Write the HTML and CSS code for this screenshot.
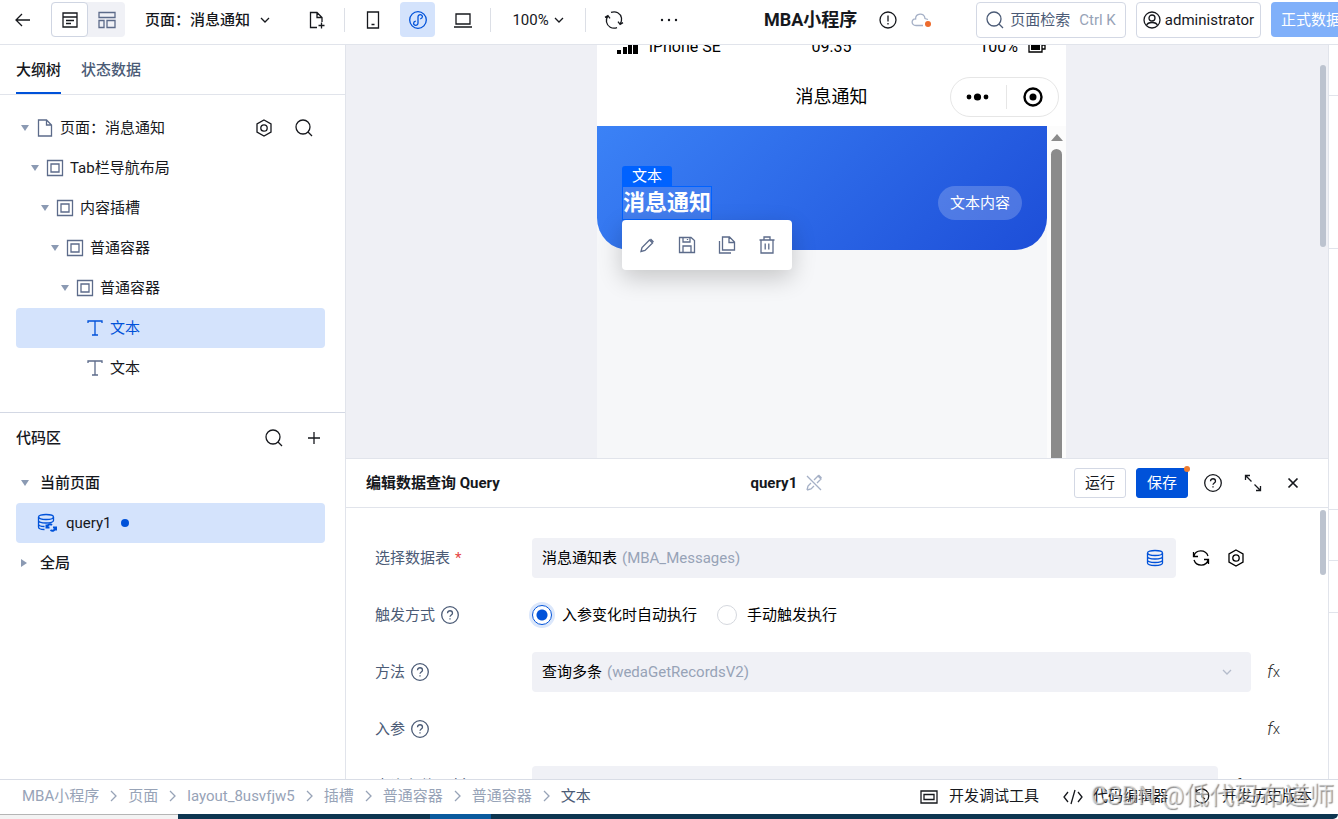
FILE: index.html
```html
<!DOCTYPE html>
<html lang="zh-CN">
<head>
    <meta charset="UTF-8">
    <meta name="viewport" content="width=device-width, initial-scale=1.0">
    <title>MBA小程序</title>
    <link rel="stylesheet" href="styles.css">
</head>
<body>
    <!-- shared icons -->
    <svg class="sprite" aria-hidden="true">
        <symbol id="i-search" viewBox="0 0 18 18"><circle cx="8" cy="8" r="7"/><path d="M13 13l4 4"/></symbol>
        <symbol id="i-gear" viewBox="0 0 18 18"><path d="M9 1l7 4v8l-7 4-7-4V5z"/><circle cx="9" cy="9" r="3.2"/></symbol>
        <symbol id="i-help" viewBox="0 0 20 20"><circle cx="10" cy="10" r="8.300"/><path d="M7.500 8.200c0-3.300 5-3.300 5 0 0 1.800-2.500 1.800-2.500 3.600M10 13.200v1.400"/></symbol>
        <symbol id="i-down" viewBox="0 0 10 10"><path d="M1 3l4 4 4-4"/></symbol>
        <symbol id="i-right" viewBox="0 0 11 12"><path d="M3 1l5 5-5 5"/></symbol>
        <symbol id="i-box" viewBox="0 0 18 18"><path d="M1.500 1.500h15v15h-15zM5 5h8v8H5z"/></symbol>
        <symbol id="i-text" viewBox="0 0 18 18"><path d="M2 4V2h14v2M9 2v14M6 16h6"/></symbol>
        <symbol id="i-db" viewBox="0 0 18 18"><ellipse cx="9" cy="4" rx="7.500" ry="2.500"/><path d="M1.500 4v10c0 3.300 15 3.300 15 0V4M1.500 7.500c0 3.300 15 3.300 15 0M1.500 11c0 3.300 15 3.300 15 0"/></symbol>
    </svg>

    <header class="topbar">
        <div class="top-main">
            <button class="plain" aria-label="返回"><svg width="16" height="18" viewBox="0 0 16 18"><path d="M15 9H1M7 3L1 9l6 6"/></svg></button>
            <div class="segment">
                <button class="on" aria-label="大纲"><svg width="18" height="18" viewBox="0 0 18 18"><path d="M2 2h14v14H2zM2 6h14M5 9.500h8M5 12.500h5"/></svg></button>
                <button aria-label="布局"><svg width="18" height="18" viewBox="0 0 18 18"><path d="M1 1.500h16v5H1zM1 9.500h5v7H1zM9 9.500h8v7H9z"/></svg></button>
            </div>
            <button class="plain page-name">页面：消息通知 <svg width="10" height="10"><use href="#i-down"/></svg></button>
        </div>
        <div class="top-tools">
            <button class="tool" aria-label="新建页面"><svg width="18" height="18" viewBox="0 0 18 18"><path d="M9 16.500H2.500v-15H9l5 5V11M9 1.500v5h5M13.500 11.500v6M10.500 14.500h6"/></svg></button>
            <span class="divider"></span>
            <button class="tool" aria-label="手机"><svg width="18" height="18" viewBox="0 0 18 18"><path d="M3.500 1h11v16h-11zM7.500 13.500h3"/></svg></button>
            <button class="tool on" aria-label="小程序"><svg width="18" height="18" viewBox="0 0 18 18"><circle cx="9" cy="9" r="8.300"/><path d="M9 12V6c0-3.200 4.600-2.800 4.400-.2-.1 1.300-1.200 1.900-2.200 2M9 6v6c0 3.200-4.600 2.800-4.400.2.100-1.300 1.200-1.900 2.200-2"/></svg></button>
            <button class="tool" aria-label="电脑"><svg width="18" height="18" viewBox="0 0 18 18"><path d="M2 3h14v10H2zM0 16h18"/></svg></button>
            <span class="divider"></span>
            <button class="tool zoom">100% <svg width="10" height="10"><use href="#i-down"/></svg></button>
            <span class="divider"></span>
            <button class="tool" aria-label="刷新"><svg width="20" height="20" viewBox="0 0 20 20"><path d="M7 2.400c5-1.800 9.600 1 10.500 5.600.4 2.500-.1 4-1.300 5.800M13 17.600c-5 1.800-9.600-1-10.500-5.600-.4-2.500.1-4 1.300-5.800M1 7.400l2.900-1.800L6 8.400M19 12.600l-2.900 1.800L14 11.600"/></svg></button>
            <button class="tool more" aria-label="更多"><svg class="solid" width="18" height="6" viewBox="0 0 18 6"><circle cx="2" cy="3" r="1.200"/><circle cx="9" cy="3" r="1.200"/><circle cx="16" cy="3" r="1.200"/></svg></button>
        </div>
        <div class="app-name">
            <h1>MBA小程序</h1>
            <svg width="18" height="18" viewBox="0 0 18 18"><circle cx="9" cy="9" r="8"/><path d="M9 4.500v6M9 12v1.500"/></svg>
            <svg width="20" height="18" viewBox="0 0 20 18"><path class="cloud" d="M12 14.500H5C-.5 14.500.3 7.500 4.600 8 4.400 2 13.500 1 14 7.500l3 1"/><circle class="cloud-dot" cx="17" cy="13" r="3"/></svg>
        </div>
        <div class="top-right">
            <button class="search-box"><svg width="18" height="18"><use href="#i-search"/></svg>页面检索 <kbd>Ctrl K</kbd></button>
            <button class="user"><svg width="18" height="18" viewBox="0 0 18 18"><circle cx="9" cy="9" r="8"/><circle cx="9" cy="7" r="3"/><path d="M3.500 14.500c1.200-4 9.800-4 11 0"/></svg>administrator</button>
            <button class="release">正式数据</button>
        </div>
    </header>

    <main class="workspace">
        <aside class="sidebar">
            <section class="outline">
                <nav class="tabs">
                    <a class="on" href="#outline">大纲树</a>
                    <a href="#state">状态数据</a>
                </nav>
                <ul class="tree" id="outline">
                    <li class="row">
                        <i class="caret"></i>
                        <svg class="node" width="18" height="18" viewBox="0 0 18 18"><path d="M2.500 1h8l5 5v11h-13zM10.500 1v5h5"/></svg>页面：消息通知
                        <span class="row-tools">
                            <button class="plain" aria-label="设置"><svg width="18" height="18"><use href="#i-gear"/></svg></button>
                            <button class="plain" aria-label="搜索"><svg width="18" height="18"><use href="#i-search"/></svg></button>
                        </span>
                    </li>
                    <li class="row lv1"><i class="caret"></i><svg class="node" width="18" height="18"><use href="#i-box"/></svg>Tab栏导航布局</li>
                    <li class="row lv2"><i class="caret"></i><svg class="node" width="18" height="18"><use href="#i-box"/></svg>内容插槽</li>
                    <li class="row lv3"><i class="caret"></i><svg class="node" width="18" height="18"><use href="#i-box"/></svg>普通容器</li>
                    <li class="row lv4"><i class="caret"></i><svg class="node" width="18" height="18"><use href="#i-box"/></svg>普通容器</li>
                    <li class="row lv5 on"><i class="caret none"></i><svg class="node" width="18" height="18"><use href="#i-text"/></svg>文本</li>
                    <li class="row lv5"><i class="caret none"></i><svg class="node" width="18" height="18"><use href="#i-text"/></svg>文本</li>
                </ul>
            </section>
            <section class="code">
                <div class="code-head">
                    <h2>代码区</h2>
                    <span class="row-tools">
                        <button class="plain" aria-label="搜索代码"><svg width="18" height="18"><use href="#i-search"/></svg></button>
                        <button class="plain" aria-label="新增"><svg width="18" height="18" viewBox="0 0 18 18"><path d="M9 3v12M3 9h12"/></svg></button>
                    </span>
                </div>
                <ul class="tree">
                    <li class="row group"><i class="caret"></i>当前页面</li>
                    <li class="row query on">
                        <svg width="20" height="20" viewBox="0 0 20 20"><ellipse cx="9" cy="4" rx="7.500" ry="2.500"/><path d="M1.500 4v10c0 1.500 2.500 2.500 6 2.500M1.500 7.500c0 3.300 15 3.300 15 0V4M1.500 11c0 1.500 2.500 2.500 6 2.500"/><path class="bold" d="M10 14c.5-2.500 3-3.500 5-2M9.500 11.500v3h3M18.500 15c-.5 2.500-3 3.500-5 2M19 17.500v-3h-3"/></svg>
                        query1 <i class="dot"></i>
                    </li>
                    <li class="row group"><i class="caret closed"></i>全局</li>
                </ul>
            </section>
        </aside>

        <div class="center">
            <section class="canvas">
                <div class="phone">
                    <div class="status">
                        <span class="carrier"><svg class="solid" width="22" height="14" viewBox="0 0 22 14"><path d="M0 10h4v4H0zM6 7h4v7H6zM11 4h4v10h-4zM16 0h5v14h-5z"/></svg>iPhone SE</span>
                        <span>09:35</span>
                        <span class="battery">100% <svg width="18" height="12" viewBox="0 0 18 12"><path d="M1 1h13v10H1zM14 4h3v4h-3"/><path class="core" d="M3 3h9v6H3z"/></svg></span>
                    </div>
                    <div class="navbar">
                        <span class="nav-title">消息通知</span>
                        <div class="capsule">
                            <svg class="solid" width="24" height="10" viewBox="0 0 24 10"><circle cx="3" cy="5" r="2.400"/><circle cx="11.500" cy="5" r="3.600"/><circle cx="20" cy="5" r="2.400"/></svg>
                            <span class="capsule-line"></span>
                            <svg width="20" height="20" viewBox="0 0 20 20"><circle class="ring" cx="10" cy="10" r="8.500"/><circle class="core" cx="10" cy="10" r="3.500"/></svg>
                        </div>
                    </div>
                    <div class="screen">
                        <div class="page">
                            <div class="banner">
                                <div class="picked">
                                    消息通知
                                    <span class="tag">文本</span>
                                    <div class="float-tools">
                                        <button class="plain" aria-label="编辑"><svg width="18" height="18" viewBox="0 0 18 18"><path d="M3 15.500l1-4 7.500-7.500 3 3L7 14.500zM12.500 3l3 3"/></svg></button>
                                        <button class="plain" aria-label="保存组件"><svg width="18" height="18" viewBox="0 0 18 18"><path d="M1.500 1.500H13l3.500 3v12h-15zM5 1.500V6h7V1.500M5 16.500V10h8v6.500M9.500 3v1"/></svg></button>
                                        <button class="plain" aria-label="复制"><svg width="18" height="18" viewBox="0 0 18 18"><path d="M4.500 1h7l5 5v8h-12zM11 1v5.500h5M1.500 5v12H13"/></svg></button>
                                        <button class="plain" aria-label="删除"><svg width="18" height="18" viewBox="0 0 18 18"><path d="M1.500 4h15M6 4V1h6v3M3 4v13h12V4M7.200 7.500v6M10.800 7.500v6"/></svg></button>
                                    </div>
                                </div>
                                <span class="pill">文本内容</span>
                            </div>
                        </div>
                        <div class="phone-scroll"><i class="up"></i><i class="thumb"></i></div>
                    </div>
                </div>
                <i class="scroll-thumb"></i>
            </section>

            <section class="editor">
                <div class="editor-head">
                    <h2>编辑数据查询 Query</h2>
                    <div class="query-name">query1
                        <svg width="18" height="18" viewBox="0 0 18 18"><path d="M2 16l1-4 3-3M9 6l4-4 3 3-4 4M9 12l-3 3-4 1M13.500 1l3 3M2 2l14 14"/></svg>
                    </div>
                    <div class="actions">
                        <button class="btn">运行</button>
                        <button class="btn primary">保存<i class="badge"></i></button>
                        <button class="icon-btn" aria-label="帮助"><svg width="20" height="20"><use href="#i-help"/></svg></button>
                        <button class="icon-btn" aria-label="全屏"><svg width="18" height="18" viewBox="0 0 18 18"><path d="M1.500 6V1.500H6M1.500 1.500l6 6M16.500 12v4.500H12M16.500 16.500l-6-6"/></svg></button>
                        <button class="icon-btn" aria-label="关闭"><svg class="thick" width="18" height="18" viewBox="0 0 18 18"><path d="M4.500 4.500l9 9M13.500 4.500l-9 9"/></svg></button>
                    </div>
                </div>
                <form class="form">
                    <div class="field">
                        <label class="name" for="table">选择数据表<em>*</em></label>
                        <div class="control">
                            <select id="table"><option>消息通知表</option></select>
                            <span class="hint">(MBA_Messages)</span>
                            <svg class="blue" width="18" height="18"><use href="#i-db"/></svg>
                        </div>
                        <div class="tail tail-table">
                            <button type="button" class="plain" aria-label="刷新数据表"><svg width="18" height="18" viewBox="0 0 18 18"><path d="M2 7c1.500-6.500 11.500-7 14 0M1.500 3v4.500H6M16 11c-1.500 6.500-11.500 7-14 0M16.500 15v-4.500H12"/></svg></button>
                            <button type="button" class="plain" aria-label="数据表设置"><svg width="18" height="18"><use href="#i-gear"/></svg></button>
                        </div>
                    </div>
                    <div class="field">
                        <span class="name">触发方式<svg width="20" height="20"><use href="#i-help"/></svg></span>
                        <div class="radios">
                            <label><input type="radio" name="trigger" checked>入参变化时自动执行</label>
                            <label><input type="radio" name="trigger">手动触发执行</label>
                        </div>
                    </div>
                    <div class="field">
                        <label class="name" for="method">方法<svg width="20" height="20"><use href="#i-help"/></svg></label>
                        <div class="control">
                            <select id="method"><option>查询多条</option></select>
                            <span class="hint">(wedaGetRecordsV2)</span>
                            <svg class="arrow" width="10" height="10"><use href="#i-down"/></svg>
                        </div>
                        <div class="tail tail-fx"><button type="button" class="plain fx"><i>f</i>x</button></div>
                    </div>
                    <div class="field">
                        <span class="name">入参<svg width="20" height="20"><use href="#i-help"/></svg></span>
                        <span class="blank"></span>
                        <div class="tail tail-fx"><button type="button" class="plain fx"><i>f</i>x</button></div>
                    </div>
                    <div class="field">
                        <label class="name" for="where">查询条件 (对象)</label>
                        <input class="control" id="where" type="text">
                        <div class="tail tail-where"><button type="button" class="plain fx"><i>f</i>x</button></div>
                    </div>
                    <i class="scroll-thumb form-thumb"></i>
                </form>
            </section>
        </div>

        <aside class="props"><i></i><i></i><i></i><i></i><i></i></aside>
    </main>

    <footer class="bottombar">
        <nav class="crumbs">
            <a href="#app">MBA小程序</a><svg width="11" height="12"><use href="#i-right"/></svg>
            <a href="#page">页面</a><svg width="11" height="12"><use href="#i-right"/></svg>
            <a href="#layout">layout_8usvfjw5</a><svg width="11" height="12"><use href="#i-right"/></svg>
            <a href="#slot">插槽</a><svg width="11" height="12"><use href="#i-right"/></svg>
            <a href="#c1">普通容器</a><svg width="11" height="12"><use href="#i-right"/></svg>
            <a href="#c2">普通容器</a><svg width="11" height="12"><use href="#i-right"/></svg>
            <a class="on" href="#text">文本</a>
        </nav>
        <div class="dev-tools">
            <button class="plain"><svg width="20" height="18" viewBox="0 0 20 18"><path d="M2 4h16v12H2zM5 7.500h10v5H5z"/></svg>开发调试工具</button>
            <button class="plain"><svg width="20" height="18" viewBox="0 0 20 18"><path d="M5 5L1 10l4 5M15 5l4 5-4 5M12 3L8 17"/></svg>代码编辑器</button>
            <button class="plain"><svg width="20" height="18" viewBox="0 0 20 18"><path d="M4 5a7 7 0 1 1 0 8M4 2v4h4M10 6v4l3 2"/></svg>开发历史版本</button>
        </div>
        <span class="watermark">CSDN @低代码布道师</span>
    </footer>
    <div class="taskbar"><i class="task-light"></i><i class="task-dark"></i><i class="task-active"></i><i class="task-rest"></i></div>
</body>
</html>
```
FILE: styles.css
```css
* {
    box-sizing: border-box;
}
body {
    display: flex;
    flex-direction: column;
    height: 100vh;
    margin: 0;
    overflow: hidden;
    background: #fff;
    color: #16181d;
    font-family: Roboto, "Noto Sans CJK SC", sans-serif;
    font-size: 15px;
    line-height: 20px;
}
h1, h2, ul {
    margin: 0;
    padding: 0;
}
h2 {
    font-size: 15px;
    font-weight: 500;
}
button, select, input, kbd {
    font: inherit;
    color: inherit;
}
button {
    display: flex;
    align-items: center;
    justify-content: center;
    padding: 0;
    border: 0;
    background: none;
    white-space: nowrap;
}
a {
    color: inherit;
    text-decoration: none;
}
svg {
    flex: none;
    fill: none;
    stroke: currentColor;
    stroke-width: 1.3;
}
svg.solid {
    fill: currentColor;
    stroke: none;
}
svg.thick {
    stroke-width: 1.7;
}
.sprite {
    display: none;
}

/* top bar */
.topbar {
    display: flex;
    flex: none;
    align-items: center;
    height: 45px;
    padding: 0 0 5px 15px;
    border-bottom: 1px solid #e1e4eb;
}
.top-main, .top-tools, .app-name, .top-right {
    display: flex;
    flex: none;
    align-items: center;
}
.top-main {
    gap: 20px;
}
.segment {
    display: flex;
    border-radius: 4px;
    background: #f0f1f6;
}
.segment button {
    width: 37px;
    height: 35px;
    border-radius: 4px;
    color: #5c6b8a;
}
.segment .on {
    border: 1px solid #cfd5e2;
    background: #fff;
    color: #16181d;
}
.page-name {
    gap: 10px;
    font-weight: 500;
}
.top-tools {
    gap: 10px;
    margin-left: 29px;
}
.tool {
    width: 35px;
    height: 35px;
    border-radius: 4px;
}
.tool.on {
    background: #d4e3fc;
    color: #0052d9;
}
.tool.zoom {
    gap: 5px;
    width: 74px;
}
.tool.more {
    margin-left: 10px;
}
.divider {
    width: 1px;
    height: 24px;
    background: #dcdfe6;
}
.app-name {
    gap: 14px;
    margin-left: 78px;
}
.app-name h1 {
    margin-right: 8px;
    font-size: 18px;
    font-weight: 700;
}
.cloud {
    stroke: #a5b0c6;
}
.cloud-dot {
    fill: #ed6b2d;
    stroke: none;
}
.top-right {
    gap: 10px;
    margin: 0 -13px 0 auto;
}
.search-box, .user {
    height: 36px;
    border: 1px solid #d3d8e4;
    border-radius: 4px;
}
.search-box {
    gap: 6px;
    width: 150px;
    color: #4b5b76;
}
.search-box kbd {
    margin-left: 3px;
    color: #97a3b7;
}
.user {
    gap: 4px;
    width: 125px;
}
.release {
    width: 80px;
    height: 35px;
    border-radius: 4px;
    background: #80b0fa;
    color: #fff;
}

/* left column */
.workspace {
    display: flex;
    flex: 1;
    min-height: 0;
}
.sidebar {
    display: flex;
    flex: none;
    flex-direction: column;
    width: 346px;
    border-right: 1px solid #e1e4eb;
}
.outline, .code {
    flex: 1;
    min-height: 0;
}
.outline {
    border-bottom: 1px solid #d3d8e4;
}
.tabs {
    display: flex;
    gap: 20px;
    height: 50px;
    padding: 0 16px;
    border-bottom: 1px solid #e1e4eb;
    color: #4b5b76;
    font-weight: 500;
    line-height: 50px;
}
.tabs .on {
    border-bottom: 2px solid #0052d9;
    color: #16181d;
}
.tree {
    padding: 0 20px 0 16px;
    list-style: none;
}
.outline .tree {
    padding-top: 13px;
}
.row {
    display: flex;
    align-items: center;
    height: 40px;
    border-radius: 4px;
}
.row.on {
    background: #d4e3fc;
}
.row .node {
    margin-right: 6px;
    color: #5c6b8a;
}
.outline .row.on, .outline .row.on .node {
    color: #0052d9;
}
.lv1 { padding-left: 10px; }
.lv2 { padding-left: 20px; }
.lv3 { padding-left: 30px; }
.lv4 { padding-left: 40px; }
.lv5 { padding-left: 50px; }
.caret {
    flex: none;
    width: 8px;
    margin: 0 7px 0 5px;
    border: 4px solid transparent;
    border-top: 6px solid #8b9ab3;
    border-bottom: 0;
}
.caret.closed {
    border: 4px solid transparent;
    border-right: 0;
    border-left: 6px solid #8b9ab3;
}
.caret.none {
    visibility: hidden;
}
.row-tools {
    display: flex;
    gap: 22px;
    margin-left: auto;
    padding-right: 12px;
}
.code-head {
    display: flex;
    align-items: center;
    height: 50px;
    padding: 0 10px 0 16px;
}
.group {
    font-weight: 500;
}
.group .caret {
    margin-right: 11px;
}
.query {
    gap: 9px;
    padding-left: 21px;
}
.query svg {
    color: #0052d9;
}
.query .bold {
    stroke-width: 2;
}
.dot {
    width: 8px;
    height: 8px;
    border-radius: 50%;
    background: #0052d9;
}

/* preview canvas */
.center {
    display: flex;
    flex: 1;
    flex-direction: column;
    min-width: 0;
}
.canvas {
    position: relative;
    display: flex;
    flex: 414;
    justify-content: center;
    min-height: 0;
    padding-right: 11px;
    overflow: hidden;
    background: #eff0f5;
}
.scroll-thumb {
    position: absolute;
    top: 20px;
    right: 2px;
    width: 6px;
    height: 182px;
    border-radius: 3px;
    background: #bcc3cf;
}
.phone {
    display: flex;
    flex-direction: column;
    width: 469px;
    background: #fff;
    color: #000;
}
.status {
    display: grid;
    grid-template-columns: 1fr auto 1fr;
    align-items: center;
    height: 24px;
    margin-top: -10px;
    padding: 0 20px;
    font-size: 16px;
}
.carrier, .battery {
    display: flex;
    gap: 10px;
    align-items: center;
}
.battery {
    justify-content: flex-end;
}
.navbar {
    display: grid;
    grid-template-columns: 1fr auto 1fr;
    align-items: center;
    height: 67px;
    padding: 9px 7px 0;
}
.nav-title {
    grid-column: 2;
    font-size: 18px;
}
.capsule {
    display: flex;
    align-items: center;
    justify-content: space-between;
    justify-self: end;
    width: 109px;
    height: 40px;
    padding: 0 15px;
    border: 1px solid #e6e6e6;
    border-radius: 20px;
}
.capsule-line {
    width: 1px;
    height: 24px;
    background: #e6e6e6;
}
.ring {
    stroke-width: 2.4;
}
.core {
    fill: currentColor;
    stroke: none;
}
.screen {
    display: flex;
    flex: 1;
}
.page {
    flex: 1;
    background: #f6f7f9;
}
.banner {
    display: flex;
    align-items: flex-start;
    justify-content: space-between;
    padding: 60px 25px 30px;
    border-radius: 0 0 32px 32px;
    background: linear-gradient(135deg, #3b82f6, #1d4ed8);
    color: #fff;
}
.picked {
    position: relative;
    border: 1px solid #0062ff;
    background: rgba(90, 140, 240, 0.4);
    font-size: 22px;
    font-weight: 700;
    line-height: 32px;
}
.tag {
    position: absolute;
    bottom: 100%;
    left: -1px;
    width: 50px;
    margin-bottom: 1px;
    border-radius: 3px 3px 0 0;
    background: #0062ff;
    font-size: 15px;
    font-weight: 400;
    line-height: 20px;
    text-align: center;
}
.float-tools {
    position: absolute;
    top: 100%;
    left: -1px;
    display: flex;
    justify-content: space-between;
    width: 170px;
    height: 50px;
    margin-top: 1px;
    padding: 0 16px;
    border-radius: 4px;
    background: #fff;
    box-shadow: 0 8px 24px rgba(0, 0, 0, 0.2);
    color: #5c6b8a;
}
.pill {
    padding: 0 12px;
    border-radius: 17px;
    background: rgba(255, 255, 255, 0.2);
    line-height: 34px;
}
.phone-scroll {
    display: flex;
    flex-direction: column;
    align-items: center;
    width: 19px;
    padding-top: 8px;
    background: #fcfcfc;
}
.up {
    border: 6px solid transparent;
    border-top: 0;
    border-bottom: 7px solid #8b8b8b;
}
.thumb {
    flex: 1;
    width: 11px;
    margin-top: 8px;
    border-radius: 6px 6px 0 0;
    background: #8b8b8b;
}

/* query editor */
.editor {
    display: flex;
    flex: 320;
    flex-direction: column;
    min-height: 0;
    border-top: 1px solid #e1e4eb;
}
.editor-head {
    display: flex;
    flex: none;
    align-items: center;
    justify-content: space-between;
    height: 49px;
    padding: 0 20px;
    border-bottom: 1px solid #e1e4eb;
}
.editor-head h2, .query-name {
    font-weight: 700;
}
.query-name {
    display: flex;
    gap: 8px;
    align-items: center;
}
.query-name svg {
    color: #a5b0c6;
}
.actions {
    display: flex;
    gap: 10px;
}
.btn {
    position: relative;
    width: 52px;
    height: 30px;
    border: 1px solid #d3d8e4;
    border-radius: 3px;
}
.btn.primary {
    border-color: #0052d9;
    background: #0052d9;
    color: #fff;
}
.badge {
    position: absolute;
    top: -3px;
    right: -3px;
    width: 6px;
    height: 6px;
    border-radius: 50%;
    background: #ed7b2f;
}
.icon-btn {
    width: 30px;
    height: 30px;
}
.form {
    position: relative;
    display: flex;
    flex: 1;
    flex-direction: column;
    gap: 17px;
    min-height: 0;
    padding: 30px 0 0 29px;
    overflow: hidden;
}
.form-thumb {
    top: 2px;
    height: 65px;
}
.field {
    display: flex;
    flex: none;
    align-items: center;
    height: 40px;
    color: #000;
}
.name {
    display: flex;
    gap: 5px;
    align-items: center;
    width: 157px;
    color: #4b5b76;
}
.name em {
    color: #e54545;
    font-style: normal;
}
.control {
    display: flex;
    flex: 1;
    gap: 4px;
    align-items: center;
    min-width: 0;
    height: 40px;
    padding: 0 12px 0 10px;
    border: 0;
    border-radius: 4px;
    background: #f0f1f6;
}
.control select {
    appearance: none;
    padding: 0;
    border: 0;
    background: none;
}
.hint {
    flex: 1;
    color: #97a3b7;
}
.blue {
    color: #0052d9;
}
.arrow {
    margin-right: 7px;
    color: #b4bccb;
}
.tail {
    display: flex;
    gap: 17px;
    padding-left: 16px;
}
.tail-table {
    width: 152px;
}
.tail-fx {
    width: 77px;
}
.tail-where {
    width: 110px;
}
.blank {
    flex: 1;
}
.fx {
    color: #333;
    font-weight: 300;
}
.fx i {
    font-size: 18px;
}
.radios {
    display: flex;
    gap: 20px;
}
.radios label {
    display: flex;
    gap: 10px;
    align-items: center;
}
.radios input {
    appearance: none;
    width: 20px;
    height: 20px;
    margin: 0;
    border: 1px solid #d5d8de;
    border-radius: 50%;
}
.radios input:checked {
    border-color: #0052d9;
    background: radial-gradient(circle, #0052d9 5px, #fff 6px);
    box-shadow: 0 0 0 3px #dbe7fb;
}

/* right panel edge */
.props {
    display: flex;
    flex: none;
    flex-direction: column;
    width: 10px;
    border-left: 1px solid #e1e4eb;
}
.props i {
    flex: 51;
    border-bottom: 1px solid #e1e4eb;
}
.props i:nth-child(1) {
    flex: 50;
}
.props i:nth-child(2) {
    flex: 154;
}
.props i:nth-child(3) {
    flex: 262;
}
.props i:last-child {
    margin-bottom: 166px;
}

/* bottom bar */
.bottombar {
    position: relative;
    display: flex;
    flex: none;
    align-items: center;
    justify-content: space-between;
    height: 35px;
    padding: 0 26px 2px 22px;
    border-top: 1px solid #d9dde6;
}
.crumbs {
    display: flex;
    gap: 9px;
    align-items: center;
    color: #97a3b7;
}
.crumbs .on {
    color: #4b5b76;
}
.dev-tools {
    display: flex;
    gap: 24px;
}
.dev-tools button {
    gap: 10px;
}
.watermark {
    position: absolute;
    right: 4px;
    color: rgba(255, 255, 255, 0.5);
    font-size: 25px;
    line-height: 34px;
    text-shadow: 1px 1px 1px rgba(90, 90, 90, 0.7);
    white-space: nowrap;
    pointer-events: none;
}
.taskbar {
    display: flex;
    flex: none;
    height: 5px;
}
.task-light {
    flex: 178;
    border-top: 1px solid #b5b5b5;
    background: #f3f3f3;
}
.task-dark {
    flex: 252;
    background: #0d3550;
}
.task-active {
    flex: 61;
    background: #0a5a9e;
}
.task-rest {
    flex: 847;
    border-bottom-right-radius: 5px;
    background: #0d3550;
}
```
